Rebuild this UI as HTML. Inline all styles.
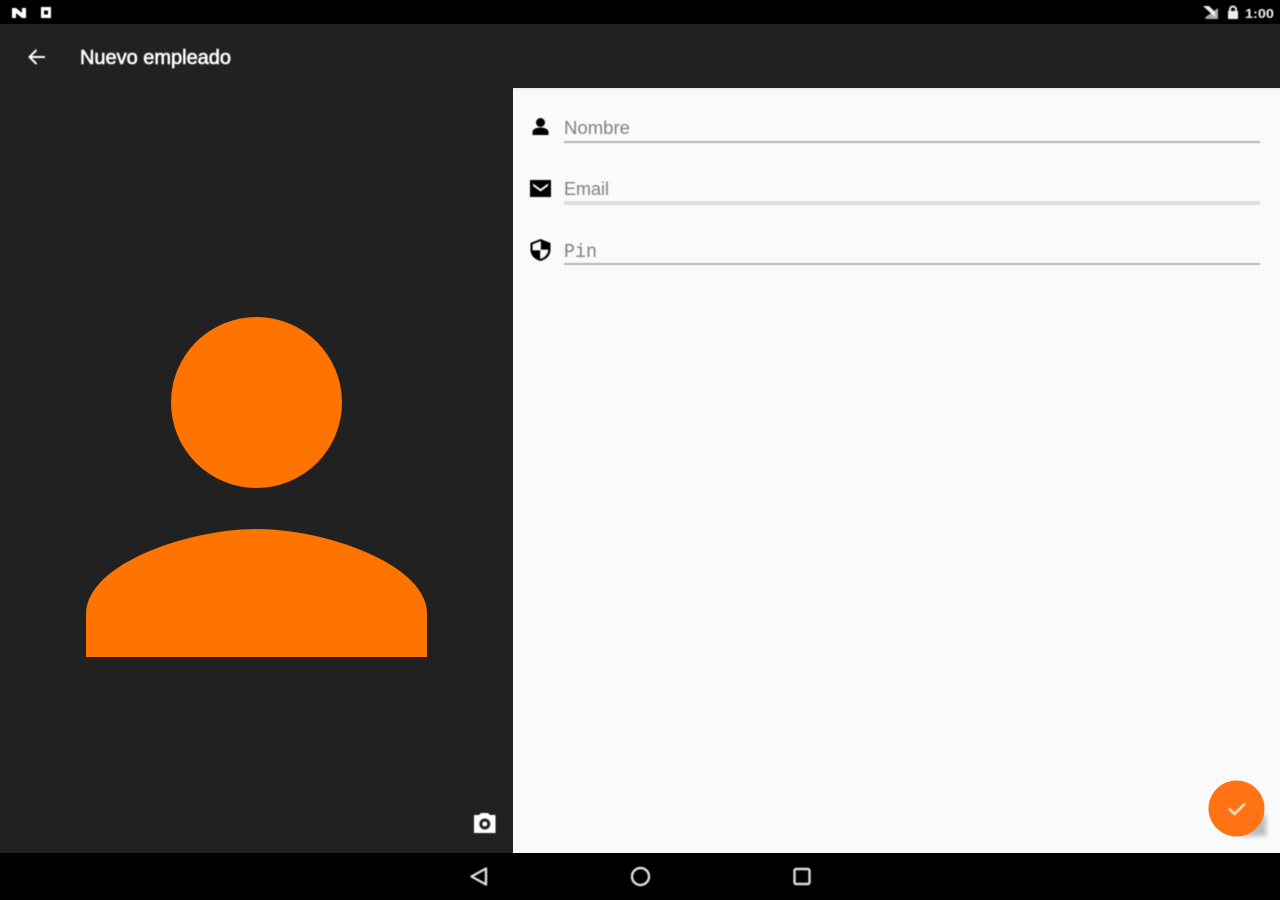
<!DOCTYPE html>
<html>
<head>
<meta charset="utf-8">
<title>Nuevo empleado</title>
<style>
html,body{margin:0;padding:0;background:#000}
#p{position:relative;width:1280px;height:900px;overflow:hidden;background:#000}
svg{position:absolute;left:0;top:0}
</style>
</head>
<body>
<div id="p">
<svg width="1280" height="900" viewBox="0 0 1280 900" xmlns="http://www.w3.org/2000/svg">
<defs>
<filter id="b" x="-10%" y="-10%" width="120%" height="120%"><feGaussianBlur stdDeviation="0.65"/></filter>
<filter id="s" x="-40%" y="-40%" width="180%" height="180%"><feGaussianBlur stdDeviation="2.500"/></filter>
</defs>
<rect x="0" y="0" width="1280" height="24" fill="#000"/>
<rect x="0" y="24" width="1280" height="64" fill="#212121"/>
<rect x="0" y="88" width="513" height="765" fill="#212121"/>
<rect x="513" y="88" width="767" height="765" fill="#fafafa"/>
<rect x="513" y="88" width="767" height="2" fill="#eee"/>
<rect x="0" y="853" width="1280" height="47" fill="#000"/>

<circle cx="256.500" cy="402.500" r="85.500" fill="#ff7300"/>
<path d="M86 657V614C86 564 188 529 256.500 529C325 529 427 564 427 614V657Z" fill="#ff7300"/>

<g filter="url(#b)">
<!-- status bar -->
<path d="M12 8h4l6 5V8h4v10h-4l-6-5v5h-4z" fill="#fff"/>
<path fill-rule="evenodd" d="M41 7h10v11H41zM44 10.500v4h4v-4z" fill="#fff"/>
<path d="M1205 17.500L1218 8V19H1206Z" fill="#aaa"/>
<path d="M1203 6h6l6 6v5z" fill="#eee"/>
<path fill-rule="evenodd" d="M1229 11V9.500a4 4 0 0 1 8 0V11h1v8h-10v-8zM1231 11h4V9.500a2 2 0 0 0-4 0z" fill="#eee"/>
<text x="1245" y="18" font-family="'Liberation Sans',sans-serif" font-size="13" font-weight="700" fill="#eee" textLength="29" lengthAdjust="spacingAndGlyphs">1:00</text>

<!-- app bar -->
<path d="M45 57H30M36.500 50L29.500 57L36.500 64" fill="none" stroke="#fff" stroke-width="2"/>
<text x="80" y="64" font-family="'Liberation Sans',sans-serif" font-size="20" fill="#fff" stroke="#fff" stroke-width=".6" textLength="151" lengthAdjust="spacingAndGlyphs">Nuevo empleado</text>

<!-- fields -->
<text x="564" y="134" font-family="'Liberation Sans',sans-serif" font-size="18" fill="#808080" textLength="66" lengthAdjust="spacingAndGlyphs">Nombre</text>
<rect x="564" y="141" width="696" height="2" fill="#b4b4b4"/>
<text x="564" y="195" font-family="'Liberation Sans',sans-serif" font-size="18" fill="#808080" textLength="45" lengthAdjust="spacingAndGlyphs">Email</text>
<rect x="564" y="201" width="696" height="4" fill="#dfdfdf"/>
<text x="564" y="257" font-family="'Liberation Mono',monospace" font-size="19" fill="#808080" textLength="33" lengthAdjust="spacingAndGlyphs">Pin</text>
<rect x="564" y="263" width="696" height="2" fill="#b4b4b4"/>

<!-- person icon -->
<circle cx="540.500" cy="122.500" r="4.500" fill="#000"/>
<path d="M532.500 135V132C532.500 129 537 127.500 540.500 127.500C544 127.500 548.500 129 548.500 132V135Z" fill="#000"/>
<!-- mail icon -->
<path fill-rule="evenodd" d="M530 180H551V197H530ZM533 183.500L540.500 189L548 183.500V186L540.500 191.500L533 186Z" fill="#000"/>
<!-- shield icon -->
<path fill-rule="evenodd" d="M540.500 239L550.500 243V250C550.500 255 546.500 259.500 540.500 261C534.500 259.500 530.500 255 530.500 250V243Z" fill="#000"/>
<path d="M540.500 241.500L533 244.500V250H540.500ZM540.500 250V258.500C544.500 257.500 547.500 254 548 250Z" fill="#fafafa"/>

<!-- camera -->
<path fill-rule="evenodd" d="M474 815H479L481 813H488L490 815H495.500V833H474ZM484.800 818.500A5.500 5.500 0 1 0 484.801 829.500A5.500 5.500 0 1 0 484.800 818.500Z" fill="#fff"/>
<circle cx="484.800" cy="824" r="2.500" fill="#fff"/>

<!-- nav -->
<path d="M486 868.500V884.500L471.500 876.500Z" fill="none" stroke="#ddd" stroke-width="2.400" stroke-linejoin="round"/>
<circle cx="640.500" cy="876.500" r="8.500" fill="none" stroke="#ddd" stroke-width="2.400"/>
<rect x="794.500" y="869" width="15" height="15" rx="1.500" fill="none" stroke="#ddd" stroke-width="2.400"/>
</g>

<!-- FAB -->
<path d="M1250 815L1266 815V836H1240Z" fill="#888" opacity=".55" filter="url(#s)"/>
<circle cx="1236.500" cy="808.500" r="28" fill="#ff7314"/>
<path d="M1229 808.500L1234.500 814L1245 803.500" fill="none" stroke="#ffe3cc" stroke-width="2.400" filter="url(#b)"/>
</svg>
</div>
</body>
</html>
